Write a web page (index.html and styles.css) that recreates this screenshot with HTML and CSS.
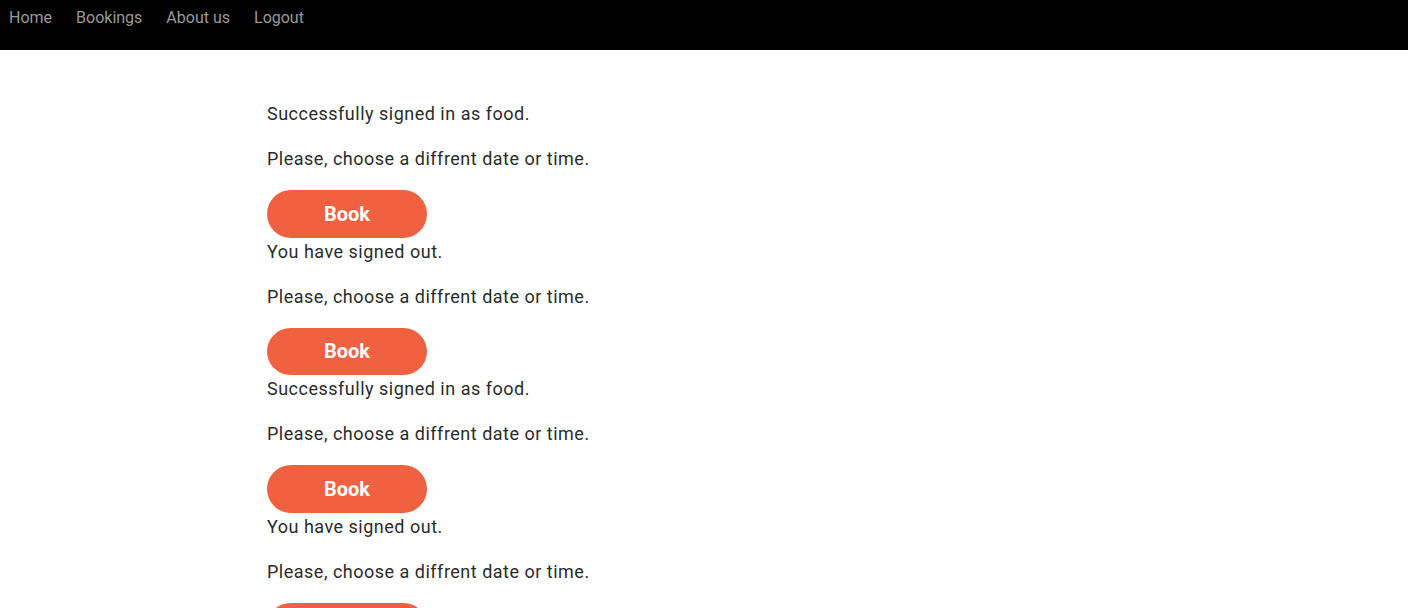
FILE: index.html
```html
<!DOCTYPE html>
<html lang="en">
<head>
<meta charset="utf-8">
<title>Bookings</title>
<link rel="stylesheet" href="styles.css">
</head>
<body>
<nav class="topnav">
  <a class="nav-link" href="#">Home</a>
  <a class="nav-link" href="#">Bookings</a>
  <a class="nav-link" href="#">About us</a>
  <a class="nav-link" href="#">Logout</a>
</nav>
<main class="content">
  <section class="group">
    <div class="msg">Successfully signed in as food.</div>
    <p class="note">Please, choose a diffrent date or time.</p>
    <button class="book-btn">Book</button>
  </section>
  <section class="group">
    <div class="msg">You have signed out.</div>
    <p class="note">Please, choose a diffrent date or time.</p>
    <button class="book-btn">Book</button>
  </section>
  <section class="group">
    <div class="msg">Successfully signed in as food.</div>
    <p class="note">Please, choose a diffrent date or time.</p>
    <button class="book-btn">Book</button>
  </section>
  <section class="group">
    <div class="msg">You have signed out.</div>
    <p class="note">Please, choose a diffrent date or time.</p>
    <button class="book-btn">Book</button>
  </section>
</main>
</body>
</html>
```
FILE: styles.css
```css
html, body {
  margin: 0;
  padding: 0;
  background: #ffffff;
  font-family: Roboto, "Liberation Sans", sans-serif;
  color: #2b2b2b;
}

.topnav {
  background: #000000;
  height: 50px;
  display: flex;
  align-items: flex-start;
  gap: 24px;
  padding-left: 9px;
  box-sizing: border-box;
}

.nav-link {
  color: #9a9a9a;
  text-decoration: none;
  font-size: 16px;
  line-height: 20px;
  padding-top: 8px;
}

.content {
  width: 874px;
  margin: 0 auto;
  padding-top: 50px;
}

.group {
  display: flex;
  flex-direction: column;
  align-items: flex-start;
}

.msg {
  font-size: 18px;
  line-height: 27px;
  letter-spacing: 0.5px;
}

.note {
  font-size: 18px;
  line-height: 27px;
  letter-spacing: 0.5px;
  margin: 18px 0;
}

.book-btn {
  width: 160px;
  height: 47.5px;
  border: none;
  border-radius: 24px;
  background: #f06141;
  color: #ffffff;
  font-family: Roboto, "Liberation Sans", sans-serif;
  font-weight: 700;
  font-size: 20px;
  padding: 0;
  cursor: pointer;
}
```
